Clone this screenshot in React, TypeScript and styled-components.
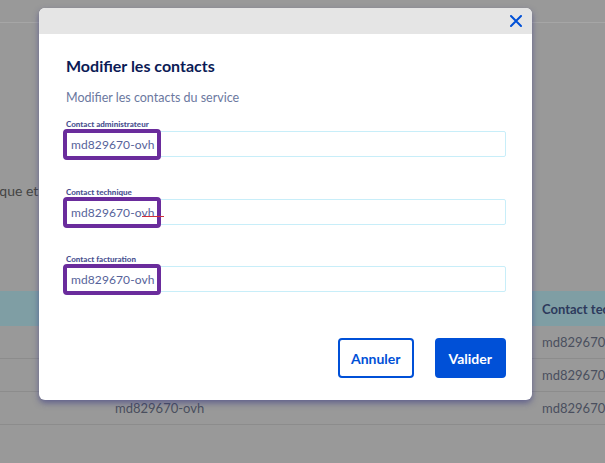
import React from "react";
import styled, { createGlobalStyle } from "styled-components";

const Global = createGlobalStyle`
  html, body { margin: 0; padding: 0; }
  body { font-family: "Lato", "Noto Sans", sans-serif; background: #999999; }
  * { box-sizing: border-box; }
`;

const Page = styled.div`
  position: relative;
  width: 605px;
  height: 463px;
  overflow: hidden;
  background: #999999;
  display: flex;
  flex-direction: column;
`;

const TopRule = styled.div`
  margin-top: 22px;
  height: 1px;
  background: #a6a6a6;
`;

const BehindText = styled.div`
  margin-top: 158px;
  height: 20px;
  margin-left: -4px;
  font-size: 14px;
  color: #444;
  line-height: 20px;
`;

const Table = styled.div`
  margin-top: 90px;
  display: flex;
  flex-direction: column;
`;

const HeadRow = styled.div`
  height: 35px;
  background: #7f9ea4;
  display: flex;
  align-items: center;
`;

const Row = styled.div`
  height: 33px;
  border-bottom: 1px solid #8c8c8c;
  display: flex;
  align-items: center;
`;

const Cell = styled.div<{ $w: number; $bold?: boolean }>`
  width: ${(p) => p.$w}px;
  flex: none;
  font-size: 13px;
  color: ${(p) => (p.$bold ? "#2d3a5c" : "#4a4f5e")};
  font-weight: ${(p) => (p.$bold ? 700 : 400)};
  white-space: nowrap;
  overflow: hidden;
`;

const Modal = styled.div`
  position: absolute;
  left: 39px;
  top: 8px;
  width: 493px;
  height: 392px;
  background: #fff;
  border-radius: 6px;
  box-shadow: 0 3px 6px rgba(50, 50, 130, 0.55);
  overflow: hidden;
  display: flex;
  flex-direction: column;
`;

const ModalHeader = styled.div`
  height: 26px;
  background: #e5e5e5;
  display: flex;
  justify-content: flex-end;
  align-items: center;
  padding-right: 9px;
`;

const CloseBtn = styled.button`
  border: none;
  background: none;
  padding: 0;
  width: 14px;
  height: 14px;
  display: flex;
  align-items: center;
  justify-content: center;
  cursor: pointer;
`;

const Body = styled.div`
  padding: 0 26px 0 27px;
  display: flex;
  flex-direction: column;
`;

const Title = styled.h2`
  margin: 22px 0 0;
  font-size: 16px;
  line-height: 20px;
  font-weight: 700;
  color: #0b1a55;
`;

const Subtitle = styled.p`
  margin: 14px 0 0;
  font-size: 12.5px;
  line-height: 16px;
  color: #6b78a0;
`;

const Field = styled.div<{ $top: number }>`
  margin-top: ${(p) => p.$top}px;
  display: flex;
  flex-direction: column;
`;

const Label = styled.label`
  font-size: 8px;
  line-height: 11px;
  font-weight: 900;
  color: #4a5291;
  margin-bottom: 1px;
`;

const InputWrap = styled.div`
  position: relative;
`;

const Input = styled.input`
  width: 100%;
  height: 26px;
  border: 1px solid #c8eef9;
  border-radius: 2px;
  padding: 0 0 0 4px;
  font-family: inherit;
  font-size: 12px;
  letter-spacing: 0.1px;
  color: #56639a;
  outline: none;
  background: #fff;
`;

const Highlight = styled.div`
  position: absolute;
  left: -3px;
  top: -2px;
  width: 98px;
  height: 31px;
  border: 4px solid #6a2c9c;
  border-radius: 4px;
  pointer-events: none;
`;

const Squiggle = styled.div`
  position: absolute;
  left: 76px;
  top: 17px;
  width: 22px;
  height: 1px;
  background: #d0303a;
  pointer-events: none;
`;

const Actions = styled.div`
  margin-top: 46px;
  display: flex;
  justify-content: flex-end;
  gap: 21px;
`;

const Button = styled.button<{ $primary?: boolean }>`
  height: 40px;
  padding: 0 ${(p) => (p.$primary ? 12 : 11)}px;
  border-radius: 4px;
  border: 2px solid #0050d7;
  background: ${(p) => (p.$primary ? "#0050d7" : "#fff")};
  color: ${(p) => (p.$primary ? "#fff" : "#0050d7")};
  font-family: inherit;
  font-size: 14px;
  font-weight: 700;
  cursor: pointer;
`;

const fields = [
  { label: "Contact administrateur", top: 13, squiggle: false },
  { label: "Contact technique", top: 30, squiggle: true },
  { label: "Contact facturation", top: 29, squiggle: false },
];

export default function App() {
  return (
    <>
      <Global />
      <Page>
        <TopRule />
        <BehindText>ique et</BehindText>
        <Table>
          <HeadRow>
            <Cell $w={542} />
            <Cell $w={63} $bold>
              Contact technique
            </Cell>
          </HeadRow>
          {[0, 1, 2].map((i) => (
            <Row key={i}>
              <Cell $w={115} />
              <Cell $w={427}>md829670-ovh</Cell>
              <Cell $w={63}>md829670-ovh</Cell>
            </Row>
          ))}
        </Table>
        <Modal>
          <ModalHeader>
            <CloseBtn aria-label="Fermer">
              <svg width="12" height="12" viewBox="0 0 12 12">
                <path d="M1 1 L11 11 M11 1 L1 11" stroke="#0050d7" strokeWidth="2" strokeLinecap="round" />
              </svg>
            </CloseBtn>
          </ModalHeader>
          <Body>
            <Title>Modifier les contacts</Title>
            <Subtitle>Modifier les contacts du service</Subtitle>
            {fields.map((f) => (
              <Field key={f.label} $top={f.top}>
                <Label>{f.label}</Label>
                <InputWrap>
                  <Input defaultValue="md829670-ovh" />
                  <Highlight />
                  {f.squiggle && <Squiggle />}
                </InputWrap>
              </Field>
            ))}
            <Actions>
              <Button>Annuler</Button>
              <Button $primary>Valider</Button>
            </Actions>
          </Body>
        </Modal>
      </Page>
    </>
  );
}
